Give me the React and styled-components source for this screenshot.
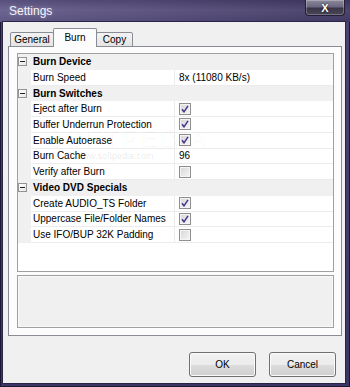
import React from "react";
import styled, { createGlobalStyle } from "styled-components";

const GlobalStyle = createGlobalStyle`
  html, body {
    margin: 0;
    padding: 0;
    background: #fff;
  }
  body {
    font-family: "Liberation Sans", Arial, sans-serif;
    font-size: 10px;
    color: #000;
  }
`;

const Frame = styled.div`
  width: 350px;
  height: 387px;
  box-sizing: border-box;
  display: flex;
  flex-direction: column;
  background: linear-gradient(to bottom, #4c4374, #3d3566);
  box-shadow: inset 0 0 0 1px #1c1834;
`;

const TitleBar = styled.div`
  height: 22px;
  flex: none;
  display: flex;
  justify-content: space-between;
  align-items: flex-start;
  padding-left: 9px;
  background:
    linear-gradient(to right, rgba(255, 255, 255, 0.1), rgba(0, 0, 0, 0.18)),
    linear-gradient(to bottom, #463d6e 0%, #5d5485 45%, #4e4577 100%);
`;

const Title = styled.span`
  font-size: 12px;
  line-height: 23px;
  color: #f4f4fa;
  text-shadow: 0 0 4px rgba(255, 255, 255, 0.3);
`;

const CloseButton = styled.div`
  width: 40px;
  height: 16px;
  margin-right: 5px;
  box-sizing: border-box;
  border: 1px solid #231f38;
  border-top: none;
  border-radius: 0 0 4px 4px;
  background: linear-gradient(to bottom, #8d8a9c 0%, #6a6780 45%, #3a3648 55%, #4a4658 100%);
  box-shadow: inset 0 0 0 1px rgba(255, 255, 255, 0.25);
  display: flex;
  align-items: center;
  justify-content: center;
  color: #fff;
  font-weight: bold;
  font-size: 11px;
  text-shadow: 0 0 2px #000;
`;

const Client = styled.div`
  flex: 1;
  margin: 0 5px 4px 3px;
  background: #f0f0f0;
  display: flex;
  flex-direction: column;
  padding: 6px 3px 6px 5px;
  box-shadow: 0 0 0 1px #2a2548;
`;

const TabStrip = styled.div`
  height: 19px;
  margin-bottom: -1px;
  padding-left: 2px;
  display: flex;
  align-items: flex-end;
  position: relative;
  z-index: 1;
`;

const Tab = styled.div`
  width: ${(p) => p.$w}px;
  height: ${(p) => (p.$active ? 19 : 15)}px;
  box-sizing: border-box;
  border: 1px solid #898c95;
  border-bottom: ${(p) => (p.$active ? "none" : "1px solid #898c95")};
  margin-left: ${(p) => (p.$first ? 0 : -1)}px;
  border-radius: 2px 2px 0 0;
  background: ${(p) =>
    p.$active ? "#fcfcfc" : "linear-gradient(to bottom, #f3f3f3, #e4e4e4)"};
  display: flex;
  align-items: center;
  justify-content: center;
  font-size: 10px;
  padding-bottom: ${(p) => (p.$active ? 1 : 0)}px;
`;

const Panel = styled.div`
  flex: 1;
  border: 1px solid #898c95;
  background: #fcfcfc;
  padding: 6px 7px 7px 8px;
  display: flex;
  flex-direction: column;
  gap: 3px;
`;

const Grid = styled.div`
  flex: 1;
  position: relative;
  border: 1px solid #a0a0a0;
  background: #fff;
  display: flex;
  flex-direction: column;
  overflow: hidden;
`;

const CategoryRow = styled.div`
  height: 15.75px;
  flex: none;
  background: #f0f0f0;
  display: flex;
  align-items: center;
  font-weight: bold;
`;

const Expander = styled.span`
  width: 9px;
  height: 9px;
  box-sizing: border-box;
  border: 1px solid #949494;
  background: linear-gradient(135deg, #ffffff, #e6e6e6);
  margin-right: 6px;
  display: flex;
  align-items: center;
  justify-content: center;
  &::after {
    content: "";
    width: 5px;
    height: 1px;
    background: #222;
  }
`;

const PropRow = styled.div`
  height: 15.75px;
  flex: none;
  display: grid;
  grid-template-columns: 13px 144px 1fr;
`;

const Gutter = styled.div`
  background: #f0f0f0;
`;

const Cell = styled.div`
  box-sizing: border-box;
  border-bottom: 1px solid #ececec;
  border-right: ${(p) => (p.$label ? "1px solid #ececec" : "none")};
  padding-left: ${(p) => (p.$label ? 2 : 4)}px;
  display: flex;
  align-items: center;
  white-space: nowrap;
`;

const CheckBox = styled.span`
  width: 12px;
  height: 12px;
  box-sizing: border-box;
  border: 1px solid #8e8f8f;
  background: linear-gradient(135deg, #d6d6d6, #f6f6f6);
  box-shadow: inset 0 0 0 1px #f4f4f4;
  display: flex;
  align-items: center;
  justify-content: center;
`;

const Watermark = styled.div`
  position: absolute;
  left: 28px;
  top: 72px;
  font-size: 24px;
  letter-spacing: 3px;
  color: rgba(0, 0, 0, 0.02);
  -webkit-text-stroke: 0.5px rgba(0, 0, 0, 0.08);
  pointer-events: none;
`;

const WatermarkUrl = styled.div`
  position: absolute;
  left: 58px;
  top: 97px;
  font-size: 9px;
  color: rgba(0, 0, 0, 0.1);
  pointer-events: none;
`;

const Description = styled.div`
  height: 53px;
  flex: none;
  box-sizing: border-box;
  border: 1px solid #a0a0a0;
  background: #f0f0f0;
  box-shadow: inset 0 0 0 1px #f8f8f8;
`;

const ButtonRow = styled.div`
  display: flex;
  justify-content: flex-end;
  gap: 13px;
  padding: 16px 6px 0 0;
`;

const Button = styled.button`
  width: 67px;
  height: 25px;
  box-sizing: border-box;
  border: 1px solid #707070;
  border-radius: 3px;
  background: linear-gradient(to bottom, #f2f2f2 0%, #ebebeb 50%, #dddddd 51%, #cfcfcf 100%);
  box-shadow: inset 0 0 0 1px #fbfbfb;
  font-family: "Liberation Sans", Arial, sans-serif;
  font-size: 10px;
  color: #000;
  padding: 0;
`;

const rows = [
  { type: "cat", label: "Burn Device" },
  { label: "Burn Speed", value: "8x (11080 KB/s)" },
  { type: "cat", label: "Burn Switches" },
  { label: "Eject after Burn", check: true },
  { label: "Buffer Underrun Protection", check: true },
  { label: "Enable Autoerase", check: true },
  { label: "Burn Cache", value: "96" },
  { label: "Verify after Burn", check: false },
  { type: "cat", label: "Video DVD Specials" },
  { label: "Create AUDIO_TS Folder", check: true },
  { label: "Uppercase File/Folder Names", check: true },
  { label: "Use IFO/BUP 32K Padding", check: false },
];

const Check = ({ on }) => (
  <CheckBox>
    {on && (
      <svg width="8" height="8" viewBox="0 0 8 8">
        <path d="M1 4.2 L3 6.8 L7 0.8" fill="none" stroke="#40368a" strokeWidth="1.5" />
      </svg>
    )}
  </CheckBox>
);

export default function App() {
  return (
    <>
      <GlobalStyle />
      <Frame>
        <TitleBar>
          <Title>Settings</Title>
          <CloseButton>X</CloseButton>
        </TitleBar>
        <Client>
          <TabStrip>
            <Tab $w={44} $first>General</Tab>
            <Tab $w={44} $active>Burn</Tab>
            <Tab $w={37}>Copy</Tab>
          </TabStrip>
          <Panel>
            <Grid>
              {rows.map((r, i) =>
                r.type === "cat" ? (
                  <CategoryRow key={i}>
                    <Expander />
                    {r.label}
                  </CategoryRow>
                ) : (
                  <PropRow key={i}>
                    <Gutter />
                    <Cell $label>{r.label}</Cell>
                    <Cell>{r.value !== undefined ? r.value : <Check on={r.check} />}</Cell>
                  </PropRow>
                )
              )}
              <Watermark>SOFTPEDIA</Watermark>
              <WatermarkUrl>www.softpedia.com</WatermarkUrl>
            </Grid>
            <Description />
          </Panel>
          <ButtonRow>
            <Button>OK</Button>
            <Button>Cancel</Button>
          </ButtonRow>
        </Client>
      </Frame>
    </>
  );
}
